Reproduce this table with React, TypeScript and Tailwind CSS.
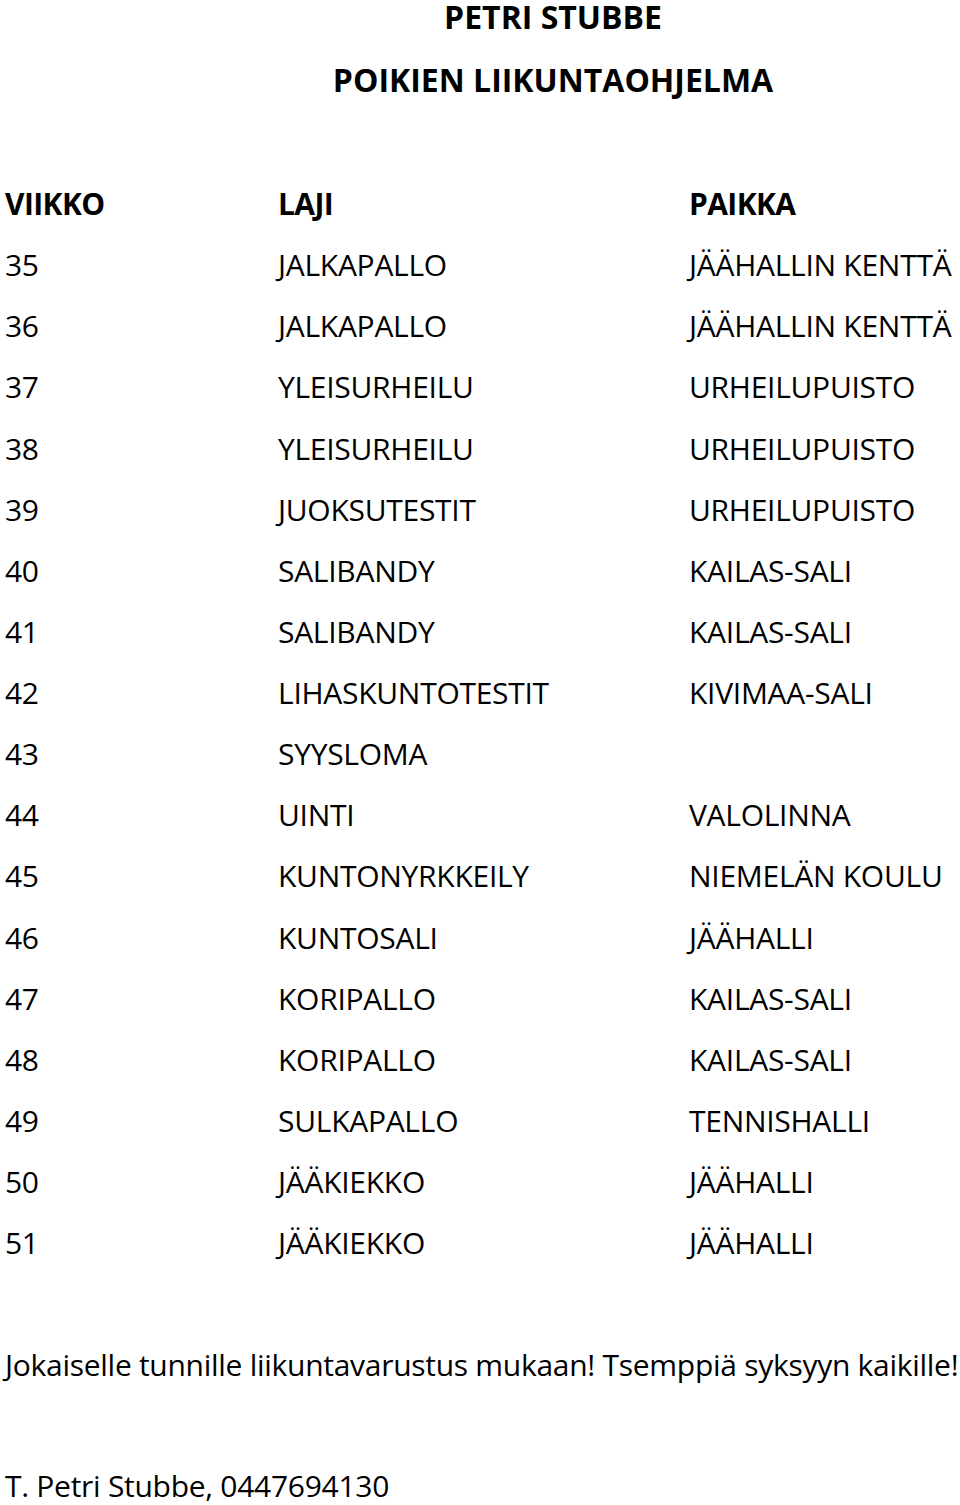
const rows: [string, string, string][] = [
  ['35', 'JALKAPALLO', 'JÄÄHALLIN KENTTÄ'],
  ['36', 'JALKAPALLO', 'JÄÄHALLIN KENTTÄ'],
  ['37', 'YLEISURHEILU', 'URHEILUPUISTO'],
  ['38', 'YLEISURHEILU', 'URHEILUPUISTO'],
  ['39', 'JUOKSUTESTIT', 'URHEILUPUISTO'],
  ['40', 'SALIBANDY', 'KAILAS-SALI'],
  ['41', 'SALIBANDY', 'KAILAS-SALI'],
  ['42', 'LIHASKUNTOTESTIT', 'KIVIMAA-SALI'],
  ['43', 'SYYSLOMA', ''],
  ['44', 'UINTI', 'VALOLINNA'],
  ['45', 'KUNTONYRKKEILY', 'NIEMELÄN KOULU'],
  ['46', 'KUNTOSALI', 'JÄÄHALLI'],
  ['47', 'KORIPALLO', 'KAILAS-SALI'],
  ['48', 'KORIPALLO', 'KAILAS-SALI'],
  ['49', 'SULKAPALLO', 'TENNISHALLI'],
  ['50', 'JÄÄKIEKKO', 'JÄÄHALLI'],
  ['51', 'JÄÄKIEKKO', 'JÄÄHALLI'],
];

export default function App() {
  return (
    <div className="w-[960px] h-[1505px] overflow-hidden bg-white text-black font-['Open_Sans',sans-serif] text-[30px] leading-[61.125px] tracking-[-0.28px]">
      {/* Title */}
      <div className="pl-[146px] text-center font-bold text-[32px] tracking-normal">
        <div className="leading-[34px]">PETRI STUBBE</div>
        <div className="leading-[34px] mt-[29px]">POIKIEN LIIKUNTAOHJELMA</div>
      </div>

      {/* Schedule */}
      <div className="mt-[76px] pl-[5px] grid grid-cols-[273px_411px_1fr]">
        <div className="font-bold tracking-[-0.6px]">VIIKKO</div>
        <div className="font-bold tracking-[-0.6px]">LAJI</div>
        <div className="font-bold tracking-[-0.6px]">PAIKKA</div>
        {rows.map(([week, sport, place]) => (
          <div key={week} className="contents">
            <div>{week}</div>
            <div>{sport}</div>
            <div>{place}</div>
          </div>
        ))}
      </div>

      {/* Footer */}
      <div className="pl-[5px] mt-[61px] whitespace-nowrap">
        Jokaiselle tunnille liikuntavarustus mukaan! Tsemppiä syksyyn kaikille!
      </div>
      <div className="pl-[5px] mt-[73px] leading-[36px] whitespace-nowrap">T. Petri Stubbe, 0447694130</div>
    </div>
  );
}
